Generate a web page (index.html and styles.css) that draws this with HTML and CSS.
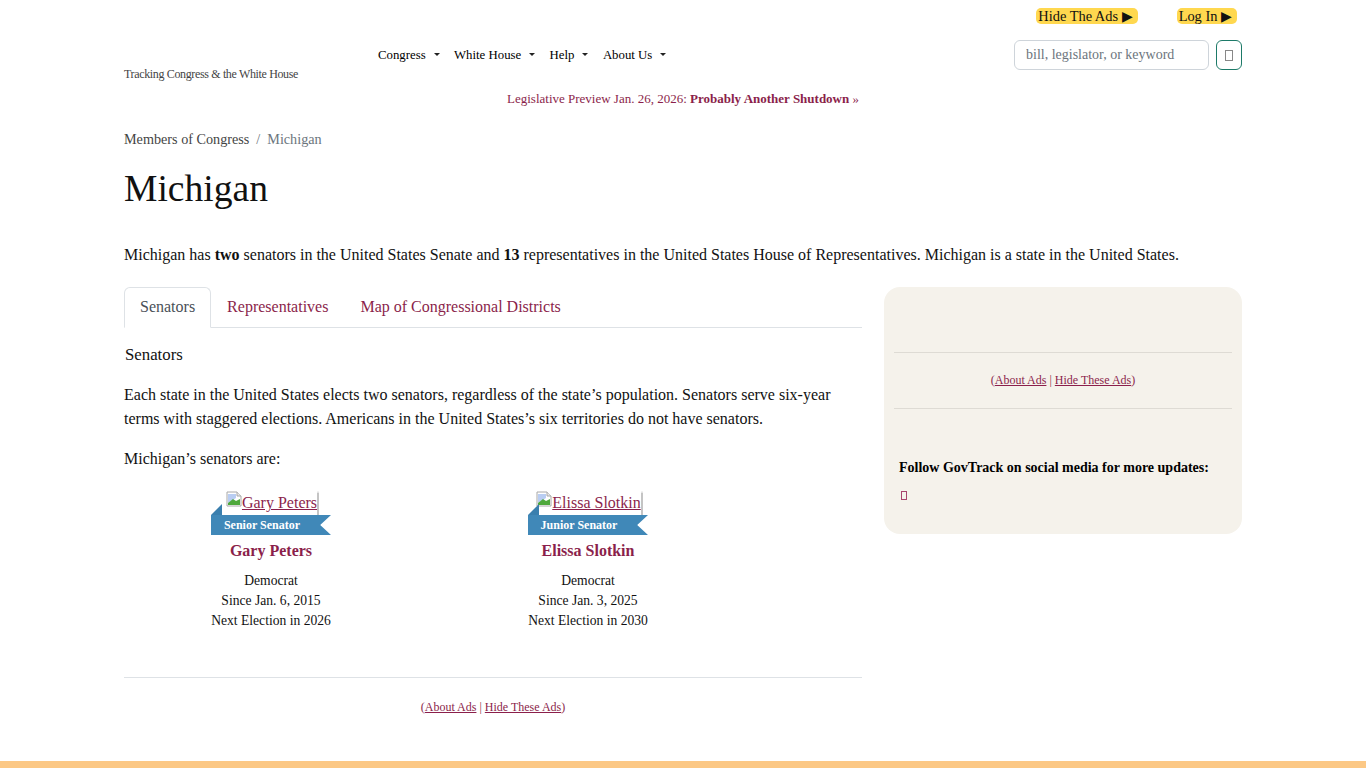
FILE: index.html
```html
<!DOCTYPE html>
<html lang="en">
<head>
    <meta charset="UTF-8">
    <title>Michigan</title>
    <link rel="stylesheet" href="styles.css">
</head>
<body>
    <div class="contenedor">
        <div class="barra-superior">
            <a class="pastilla" href="#">Hide The Ads ▶</a>
            <a class="pastilla" href="#">Log In ▶</a>
        </div>
        <div class="cabecera">
            <div class="lema">Tracking Congress &amp; the White House</div>
            <ul class="menu">
                <li>Congress</li>
                <li>White House</li>
                <li>Help</li>
                <li>About Us</li>
            </ul>
            <div class="buscador">
                <input type="text" placeholder="bill, legislator, or keyword">
                <button class="boton-buscar"><span class="tofu"></span></button>
            </div>
        </div>
        <div class="aviso">Legislative Preview Jan. 26, 2026: <b>Probably Another Shutdown</b> »</div>

        <div class="migas"><a href="#">Members of Congress</a><span class="sep">/</span><span class="actual">Michigan</span></div>
        <h1>Michigan</h1>
        <p class="intro">Michigan has <b>two</b> senators in the United States Senate and <b>13</b> representatives in the United States House of Representatives. Michigan is a state in the United States.</p>

        <div class="columnas">
            <div class="principal">
                <ul class="pestanas">
                    <li class="activa">Senators</li>
                    <li>Representatives</li>
                    <li>Map of Congressional Districts</li>
                </ul>
                <h2>Senators</h2>
                <p>Each state in the United States elects two senators, regardless of the state’s population. Senators serve six-year terms with staggered elections. Americans in the United States’s six territories do not have senators.</p>
                <p>Michigan’s senators are:</p>

                <div class="senadores">
                    <div class="senador">
                        <a class="foto" href="#">
                            <svg width="16" height="16" viewBox="0 0 16 16"><path d="M1 1h10l4 4v10H1z" fill="#fff" stroke="#a8a8a8"/><path d="M11 1v4h4" fill="#e8e8e8" stroke="#a8a8a8"/><path d="M2 3h8v4l-5 3-3 2z" fill="#b9cdf2"/><path d="M2 14v-2l5-4 3 2 4-2v6z" fill="#4ea83c"/></svg>Gary Peters</a>
                        <div class="cinta">Senior Senator</div>
                        <div class="nombre">Gary Peters</div>
                        <div class="datos">Democrat<br>Since Jan. 6, 2015<br>Next Election in 2026</div>
                    </div>
                    <div class="senador">
                        <a class="foto" href="#">
                            <svg width="16" height="16" viewBox="0 0 16 16"><path d="M1 1h10l4 4v10H1z" fill="#fff" stroke="#a8a8a8"/><path d="M11 1v4h4" fill="#e8e8e8" stroke="#a8a8a8"/><path d="M2 3h8v4l-5 3-3 2z" fill="#b9cdf2"/><path d="M2 14v-2l5-4 3 2 4-2v6z" fill="#4ea83c"/></svg>Elissa Slotkin</a>
                        <div class="cinta">Junior Senator</div>
                        <div class="nombre">Elissa Slotkin</div>
                        <div class="datos">Democrat<br>Since Jan. 3, 2025<br>Next Election in 2030</div>
                    </div>
                </div>

                <div class="anuncio anuncio-pie">(<a href="#">About Ads</a> | <a href="#">Hide These Ads</a>)</div>
            </div>

            <div class="lateral">
                <div class="anuncio anuncio-lateral">(<a href="#">About Ads</a> | <a href="#">Hide These Ads</a>)</div>
                <div class="social">Follow GovTrack on social media for more updates:</div>
                <span class="tofu tofu-rojo"></span>
            </div>
        </div>
    </div>
    <div class="pie"></div>
</body>
</html>
```

FILE: styles.css
```css
html, body {
    margin: 0;
    padding: 0;
}
body {
    font-family: "Liberation Serif", "Times New Roman", serif;
    font-size: 16px;
    line-height: 24px;
    color: #111;
    background-color: #fff;
    height: 768px;
    overflow: hidden;
    display: flex;
    flex-direction: column;
}
a {
    color: #8b1f4b;
}
.contenedor {
    width: 1118px;
    margin: 0 auto;
    flex: 1;
}
.barra-superior {
    display: flex;
    justify-content: flex-end;
    gap: 39px;
    padding: 8px 5px 0 0;
    height: 40px;
    box-sizing: border-box;
}
.pastilla {
    background-color: #ffd84f;
    border-radius: 5px;
    color: #111;
    font-size: 14.4px;
    line-height: 16px;
    height: 16px;
    padding: 0 5px 0 2px;
    text-decoration: none;
}
.cabecera {
    display: flex;
    height: 44px;
}
.lema {
    width: 254px;
    padding-top: 22px;
    font-size: 12px;
    line-height: 24px;
    letter-spacing: -0.35px;
    color: #444;
}
.menu {
    display: flex;
    gap: 14.4px;
    list-style: none;
    margin: 0;
    padding: 3px 0 0;
    font-size: 12.8px;
    flex: 1;
    color: #000;
}
.menu li::after {
    content: "";
    display: inline-block;
    margin-left: 8px;
    vertical-align: 3px;
    border-top: 3px solid #222;
    border-left: 3px solid transparent;
    border-right: 3px solid transparent;
}
.buscador {
    display: flex;
    gap: 7px;
    height: 30px;
}
.buscador input {
    width: 195px;
    height: 30px;
    box-sizing: border-box;
    border: 1px solid #ced4da;
    border-radius: 6px;
    padding: 0 11px;
    font-family: inherit;
    font-size: 14px;
}
.buscador input::placeholder {
    color: #6c757d;
    opacity: 1;
}
.boton-buscar {
    width: 26px;
    height: 30px;
    padding: 0;
    background: #fff;
    border: 1px solid #1d7a68;
    border-radius: 6px;
    display: flex;
    align-items: center;
    justify-content: center;
}
.tofu {
    display: inline-block;
    width: 6px;
    height: 9px;
    border: 1px solid #888;
}
.tofu-rojo {
    border-color: #a8466e;
    width: 4px;
    height: 7px;
}
.aviso {
    text-align: center;
    font-size: 13px;
    line-height: 20px;
    color: #8b1f4b;
    height: 20px;
    margin-top: 5px;
}
.migas {
    margin-top: 19px;
    font-size: 14.2px;
    line-height: 22px;
}
.migas a {
    color: #444;
    text-decoration: none;
}
.sep {
    color: #6c757d;
    padding: 0 7px;
}
.actual {
    color: #6c757d;
}
h1 {
    font-size: 37.6px;
    font-weight: 400;
    line-height: 45px;
    margin: 16px 0 0;
}
.intro {
    margin: 32px 0 0;
}
.columnas {
    display: flex;
    gap: 22px;
    margin-top: 20px;
    align-items: flex-start;
}
.principal {
    width: 738px;
}
.pestanas {
    display: flex;
    list-style: none;
    margin: 0;
    padding: 0;
    height: 41px;
    box-sizing: border-box;
    border-bottom: 1px solid #dee2e6;
    color: #8b1f4b;
}
.pestanas li {
    padding: 7px 15px 0;
    height: 41px;
    box-sizing: border-box;
    border: 1px solid transparent;
}
.pestanas .activa {
    color: #495057;
    background: #fff;
    border-color: #dee2e6 #dee2e6 #fff;
    border-radius: 6px 6px 0 0;
}
h2 {
    font-size: 16.8px;
    font-weight: 400;
    line-height: 24px;
    margin: 15px 0 1px 1px;
}
.principal p {
    margin: 16px 0 0;
}
.senadores {
    display: flex;
    gap: 197px;
    padding-left: 87px;
    margin-top: 19px;
}
.senador {
    position: relative;
    width: 120px;
    text-align: center;
    font-size: 13.6px;
    line-height: 20px;
    white-space: nowrap;
}
.senador::before {
    content: "";
    position: absolute;
    left: 0;
    top: 14px;
    border-bottom: 11px solid #3a7fae;
    border-left: 11px solid transparent;
}
.foto {
    display: inline-block;
    height: 25px;
    font-size: 16px;
    line-height: 25px;
    background: #fff;
    box-shadow: 2px 0 1px -0.5px #c4c4c4;
    margin: 0 -10px;
    vertical-align: top;
}
.foto svg {
    vertical-align: top;
    margin: 1px 0 0 1px;
}
.cinta {
    background-color: #4088b8;
    color: #fff;
    font-size: 12px;
    font-weight: 700;
    line-height: 20px;
    height: 20px;
    padding-right: 18px;
    clip-path: polygon(0 0, 100% 0, 91% 50%, 100% 100%, 0 100%);
}
.nombre {
    color: #8b1f4b;
    font-size: 16px;
    font-weight: 700;
    line-height: 24px;
    margin-top: 4px;
}
.datos {
    margin-top: 8px;
}
.anuncio {
    text-align: center;
    font-size: 12px;
    line-height: 18px;
    color: #8b1f4b;
}
.anuncio a {
    color: #8b1f4b;
}
.anuncio-pie {
    border-top: 1px solid #dee2e6;
    margin-top: 46px;
    padding-top: 20px;
}
.lateral {
    width: 358px;
    height: 247px;
    box-sizing: border-box;
    background-color: #f5f2eb;
    border-radius: 16px;
    padding: 65px 10px 0;
}
.anuncio-lateral {
    border-top: 1px solid #dedbd4;
    border-bottom: 1px solid #dedbd4;
    height: 57px;
    box-sizing: border-box;
    padding-top: 18px;
}
.social {
    font-size: 14px;
    font-weight: 700;
    color: #000;
    margin: 47px 0 0 5px;
    line-height: 24px;
}
.lateral .tofu-rojo {
    margin: 11px 0 0 7px;
}
.pie {
    height: 7px;
    background-color: #fcc885;
    flex-shrink: 0;
}
```
